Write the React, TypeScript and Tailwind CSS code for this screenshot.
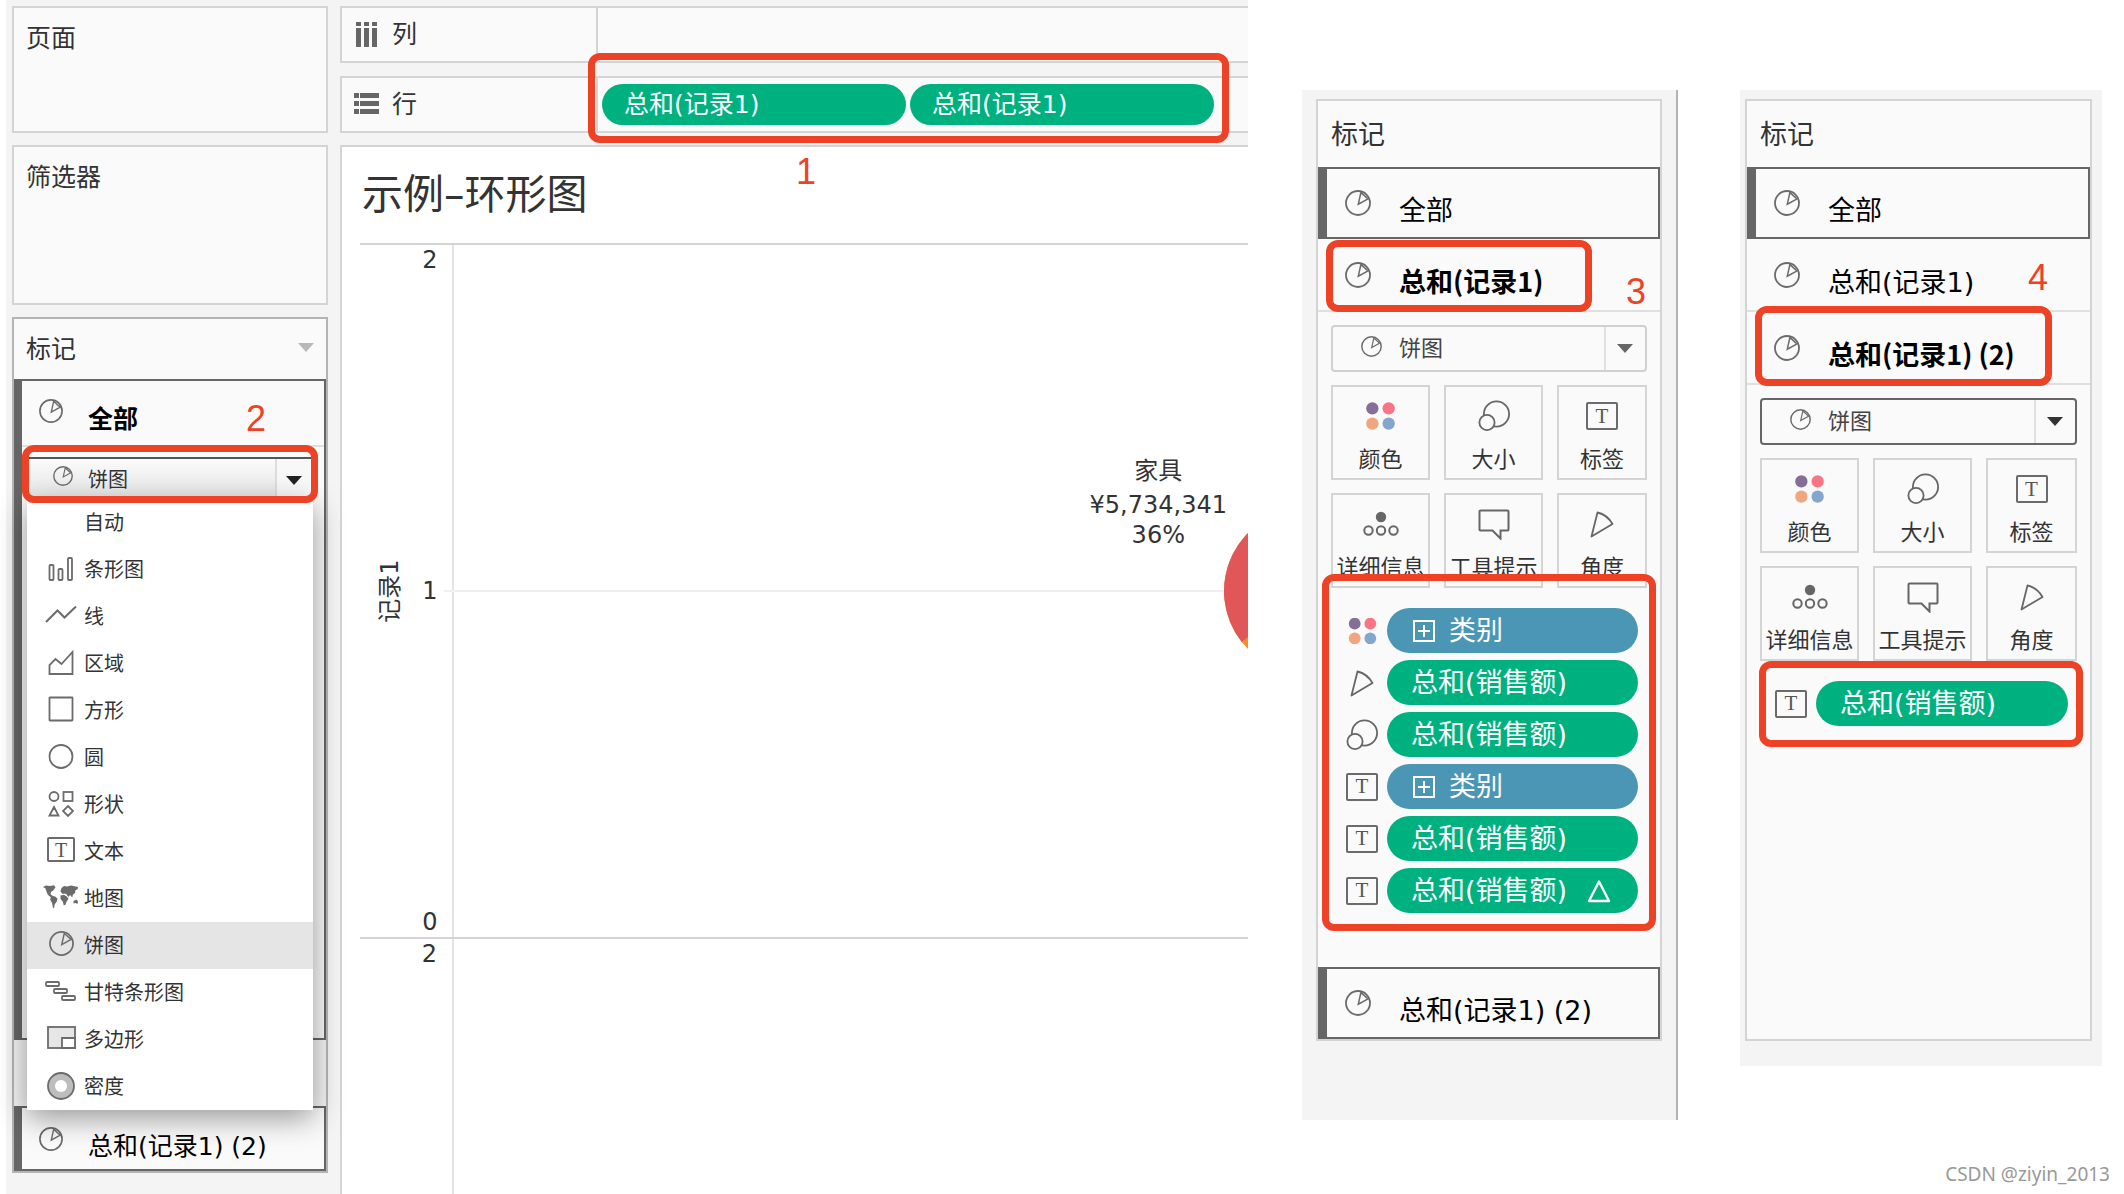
import clsx from 'clsx'
import type { ReactNode } from 'react'

type IconProps = { className?: string }

function PieIcon({ className = 'size-[26px]' }: IconProps) {
  return (
    <svg viewBox="0 0 26 26" fill="none" stroke="#6b6b6b" className={clsx('shrink-0', className)}>
      <circle cx="13" cy="13" r="12" strokeWidth="1.8" />
      <path d="M16 2 13.3 14.2 24 8.3M16 2.6 22.4 8.4" strokeWidth="1.5" />
    </svg>
  )
}

function ColorIcon({ className = 'h-[30px] w-8' }: IconProps) {
  return (
    <svg viewBox="0 0 32 30" className={className}>
      <circle cx="7" cy="6.5" r="6.8" fill="#866f97" />
      <circle cx="25" cy="6.5" r="6.8" fill="#f87585" />
      <circle cx="7" cy="23.5" r="6.8" fill="#f2a67e" />
      <circle cx="25" cy="23.5" r="6.8" fill="#84a5cc" />
    </svg>
  )
}

function SizeIcon() {
  return (
    <svg viewBox="0 0 32 32" fill="#fafafa" stroke="#666" strokeWidth="1.8" className="size-8">
      <circle cx="18.5" cy="14" r="12.6" />
      <circle cx="9" cy="22.5" r="7.6" />
    </svg>
  )
}

function TextIcon({ className = 'h-7 w-8 text-[21px]' }: IconProps) {
  return (
    <span
      className={clsx(
        "flex shrink-0 items-center justify-center rounded-xs border-2 border-[#6b6b6b] font-['Liberation_Serif',serif] leading-none text-[#555]",
        className,
      )}
    >
      T
    </span>
  )
}

function DetailIcon() {
  return (
    <svg viewBox="0 0 36 32" fill="none" stroke="#666" strokeWidth="2" className="h-8 w-9">
      <circle cx="18" cy="9" r="5.2" fill="#666" stroke="none" />
      <circle cx="5.5" cy="22.5" r="4.2" />
      <circle cx="18" cy="22.5" r="4.2" />
      <circle cx="30.5" cy="22.5" r="4.2" />
    </svg>
  )
}

function TooltipIcon() {
  return (
    <svg viewBox="0 0 32 32" fill="none" stroke="#666" strokeWidth="2" className="size-8">
      <path d="M2.5 2.5h27a1 1 0 0 1 1 1v18a1 1 0 0 1-1 1h-7v8l-8-8h-12a1 1 0 0 1-1-1v-18a1 1 0 0 1 1-1Z" />
    </svg>
  )
}

function AngleIcon() {
  return (
    <svg viewBox="0 0 32 32" fill="none" stroke="#666" strokeWidth="1.8" className="size-8">
      <path d="M11.5 4.5C18 6 23 10 26.5 16L5.5 28.5Z" strokeLinejoin="round" />
    </svg>
  )
}

function MenuSvg({ children }: { children: ReactNode }) {
  return (
    <svg viewBox="0 0 36 30" fill="none" stroke="#6b6b6b" strokeWidth="1.8" className="h-[30px] w-9 shrink-0">
      {children}
    </svg>
  )
}

function Caret({ className }: IconProps) {
  return (
    <svg viewBox="0 0 16 9" className={clsx('h-[9px] w-4', className)}>
      <path d="M0 0h16L8 9Z" fill="currentColor" />
    </svg>
  )
}

const markTypes: { name: string; icon: ReactNode }[] = [
  { name: '自动', icon: <MenuSvg>{null}</MenuSvg> },
  {
    name: '条形图',
    icon: (
      <MenuSvg>
        <rect x="6.5" y="10" width="4" height="15" rx="1" />
        <rect x="15.5" y="14" width="4" height="11" rx="1" />
        <rect x="25" y="3" width="4" height="22" rx="1" />
      </MenuSvg>
    ),
  },
  {
    name: '线',
    icon: (
      <MenuSvg>
        <path d="M3 20 14.5 8.500l7 7L33 4.500" strokeWidth="2" />
      </MenuSvg>
    ),
  },
  {
    name: '区域',
    icon: (
      <MenuSvg>
        <path d="M6.5 25V16l6-6 6 5L29.500 3v22Z" />
      </MenuSvg>
    ),
  },
  {
    name: '方形',
    icon: (
      <MenuSvg>
        <rect x="6.500" y="1.500" width="23" height="23" rx="0.500" />
      </MenuSvg>
    ),
  },
  {
    name: '圆',
    icon: (
      <MenuSvg>
        <circle cx="18" cy="13.500" r="11.500" />
      </MenuSvg>
    ),
  },
  {
    name: '形状',
    icon: (
      <MenuSvg>
        <circle cx="11" cy="6.500" r="4.500" />
        <rect x="20.500" y="2" width="9" height="9" />
        <path d="M11 17l4.500 8.500h-9ZM25 16l5 5-5 5-5-5Z" />
      </MenuSvg>
    ),
  },
  {
    name: '文本',
    icon: (
      <span className="flex w-9 shrink-0 justify-center">
        <TextIcon className="mb-1 h-[25px] w-7 text-[20px]" />
      </span>
    ),
  },
  {
    name: '地图',
    icon: (
      <MenuSvg>
        <path
          stroke="none"
          fill="#6b6b6b"
          d="M0 3 3 1.500l4 .5 4-.8 1.500 2-1 1.500-1.500 2-2 1-.5 2.500 2 1.500 3 1 2 2-.8 3-2 2.500-.7 4-1-.5-1-5-1.800-3 .6-2.500-3-2.500L3.500 7.500 2.500 4.500ZM17.500 7l1-3 2.500-2 3 .5 4-1 7 1.500-.5 2.500-2 .5-.5 3-2 1.500-.8 3-2-2.500-2 2-1.500-2.500-2-1-2 .5-1.500-1.500ZM17.500 11.500l3.500-.7 3 2 1.500 2-2 3-1 3-1.700.7-1-4-2.300-2.500ZM30.500 17l3-1.500 1.500 2-.5 2.500-2-1-2 .4Z"
        />
      </MenuSvg>
    ),
  },
  {
    name: '饼图',
    icon: (
      <span className="flex w-9 shrink-0 justify-center">
        <PieIcon className="mb-1 size-[25px]" />
      </span>
    ),
  },
  {
    name: '甘特条形图',
    icon: (
      <MenuSvg>
        <rect x="3" y="4" width="13" height="4" rx="1" />
        <rect x="11" y="11" width="13" height="4" rx="1" />
        <rect x="19" y="18" width="13" height="4" rx="1" />
      </MenuSvg>
    ),
  },
  {
    name: '多边形',
    icon: (
      <MenuSvg>
        <rect x="5" y="2" width="27" height="21" fill="#e6e6e6" />
        <path d="M19 23V13h13v10Z" fill="#fff" />
      </MenuSvg>
    ),
  },
  {
    name: '密度',
    icon: (
      <MenuSvg>
        <circle cx="18" cy="14" r="13" fill="#bdbdbd" />
        <circle cx="18" cy="14" r="6" fill="#fff" stroke="none" />
      </MenuSvg>
    ),
  },
]

function Highlight({ className }: IconProps) {
  return (
    <div
      className={clsx(
        'pointer-events-none absolute z-20 rounded-xl border-[7px] border-[#ee4226]',
        className,
      )}
    />
  )
}

function Step({ value, className }: { value: number; className: string }) {
  return (
    <span
      className={clsx(
        "absolute z-20 font-['Liberation_Sans',sans-serif] text-4xl text-[#ee4226]",
        className,
      )}
    >
      {value}
    </span>
  )
}

type LayerProps = {
  label: string
  card?: boolean
  compact?: boolean
  bold?: boolean
  className?: string
  children?: ReactNode
}

function Layer({ label, card, compact, bold, className, children }: LayerProps) {
  return (
    <div
      className={clsx(
        'relative flex shrink-0 items-center text-black',
        compact ? 'gap-[25px] text-[25px]' : 'gap-7 text-[27px]',
        card && 'border-2 border-[#666]',
        card && (compact ? 'h-[65px] border-l-8 pl-[17px]' : 'h-[72px] border-l-[9px] pl-[18px]'),
        !card && 'border-b-2 border-[#e0e0e0]',
        !card && (compact ? 'h-[66px] pb-1 pl-[17px]' : 'h-[73px] pl-[27px]'),
        className,
      )}
    >
      <PieIcon className={compact ? 'size-6' : 'size-[26px]'} />
      <span
        className={clsx(
          'leading-8 whitespace-nowrap',
          bold ? "mt-3 font-['Noto_Sans_CJK_SC',sans-serif] font-bold" : 'mt-4',
        )}
      >
        {label}
      </span>
      {children}
    </div>
  )
}

function MarkSelect({ labelId, active }: { labelId: string; active?: boolean }) {
  return (
    <div className="relative">
      <select
        aria-labelledby={labelId}
        defaultValue="饼图"
        className={clsx(
          'block h-[47px] w-full appearance-none rounded-sm border-2 pl-[66px] text-[22px] text-[#444]',
          active ? 'border-[#666]' : 'border-[#d0d0d0]',
        )}
      >
        {markTypes.map(({ name }) => (
          <option key={name}>{name}</option>
        ))}
      </select>
      <PieIcon className="pointer-events-none absolute top-[11px] left-[30px] size-[21px]" />
      <div
        className={clsx(
          'pointer-events-none absolute inset-y-[2px] right-[2px] flex w-[41px] items-center justify-center border-l-2 border-[#e0e0e0]',
          active ? 'text-[#333]' : 'text-[#666]',
        )}
      >
        <Caret className="mr-px" />
      </div>
    </div>
  )
}

const tiles = [
  { name: '颜色', icon: <ColorIcon className="h-7 w-[29px]" /> },
  { name: '大小', icon: <SizeIcon /> },
  { name: '标签', icon: <TextIcon /> },
  { name: '详细信息', icon: <DetailIcon /> },
  { name: '工具提示', icon: <TooltipIcon /> },
  { name: '角度', icon: <AngleIcon /> },
]

function Tiles() {
  return (
    <div className="mt-[13px] grid grid-cols-[99px_99px_1fr] gap-x-[14px] gap-y-[13px]">
      {tiles.map(({ name, icon }) => (
        <button
          key={name}
          className="flex h-[95px] flex-col items-center gap-3 border-2 border-[#d4d4d4] pt-[13px] text-[22px] leading-8 whitespace-nowrap text-[#333]"
        >
          <span className="flex h-8 items-center">{icon}</span>
          {name}
        </button>
      ))}
    </div>
  )
}

type Field = { icon: ReactNode; name: string; dimension?: boolean; delta?: boolean }

const layerFields: Field[] = [
  { icon: <ColorIcon className="h-[26px] w-[29px]" />, name: '类别', dimension: true },
  { icon: <AngleIcon />, name: '总和(销售额)' },
  { icon: <SizeIcon />, name: '总和(销售额)' },
  { icon: <TextIcon />, name: '类别', dimension: true },
  { icon: <TextIcon />, name: '总和(销售额)' },
  { icon: <TextIcon />, name: '总和(销售额)', delta: true },
]

function Fields({ items }: { items: Field[] }) {
  return (
    <ul className="relative mt-5 flex flex-col gap-[7px]">
      {items.map(({ icon, name, dimension, delta }, index) => (
        <li key={index} className="flex h-[45px] items-center gap-[9px] pr-[9px] pl-[15px]">
          <span className="flex w-8 shrink-0 justify-center">{icon}</span>
          <div
            className={clsx(
              'flex h-full flex-1 items-center rounded-full text-[27px] text-white',
              dimension ? 'bg-[#4a96b4] pl-[26px]' : 'bg-[#00b180] pl-6',
            )}
          >
            {dimension && (
              <svg viewBox="0 0 22 22" fill="none" stroke="#fff" strokeWidth="2" className="mr-3.5 size-[22px]">
                <path d="M1 1h20v20H1ZM5 11h12M11 5v12" />
              </svg>
            )}
            <span className="leading-8">{name}</span>
            {delta && (
              <svg viewBox="0 0 24 24" fill="none" stroke="#fff" strokeWidth="2.4" className="ml-5 size-6">
                <path d="M12 2.500 22 22H2Z" strokeLinejoin="round" />
              </svg>
            )}
          </div>
        </li>
      ))}
    </ul>
  )
}

function MarksPanel({ titleId, children }: { titleId: string; children: ReactNode }) {
  return (
    <div className="flex min-h-[942px] flex-col border-2 border-[#d4d4d4] bg-[#fafafa]">
      <h2 id={titleId} className="flex h-[66px] shrink-0 items-center pt-0.5 pl-[13px] text-[27px] text-[#333]">
        标记
      </h2>
      {children}
    </div>
  )
}

function MarksDropdown() {
  return (
    <div className="relative mt-[10px] mr-[10px] ml-1">
      <select
        aria-labelledby="marks-title"
        defaultValue="饼图"
        className="block h-[43px] w-full appearance-none border-t-2 border-[#555] bg-linear-to-b from-[#fafafa] to-[#e6e6e6] pl-[62px] text-[20px] text-[#333]"
      >
        {markTypes.map(({ name }) => (
          <option key={name}>{name}</option>
        ))}
      </select>
      <PieIcon className="pointer-events-none absolute top-[9px] left-[27px] size-5" />
      <div className="pointer-events-none absolute top-[2px] right-0 flex h-[40px] w-[39px] items-center justify-center border-l-2 border-[#ddd] bg-[#f8f8f8] text-[#222]">
        <Caret className="mt-0.5 mr-1" />
      </div>
      <ul className="absolute top-[42px] right-px left-px z-10 bg-white shadow-[0_8px_28px_rgba(0,0,0,0.4)]">
        {markTypes.map(({ name, icon }) => (
          <li key={name}>
            <button
              className={clsx(
                'flex h-[47px] w-full items-center gap-[5px] pl-4 text-[20px] text-[#333]',
                name === '饼图' && 'bg-[#e5e5e5]',
              )}
            >
              {icon}
              {name}
            </button>
          </li>
        ))}
      </ul>
      <Highlight className="-top-3 -right-1 -left-1 h-[58px]" />
    </div>
  )
}

function Sidebar() {
  return (
    <aside className="flex flex-col gap-3 text-[25px] text-[#333]">
      <section className="h-[127px] border-2 border-[#d4d4d4] bg-[#fafafa] px-3 py-[15px]">
        <h2 className="leading-8">页面</h2>
      </section>
      <section className="h-40 border-2 border-[#d4d4d4] bg-[#fafafa] px-3 py-[15px]">
        <h2 className="leading-8">筛选器</h2>
      </section>
      <section className="border-2 border-[#b4b4b4] bg-[#f4f4f4]">
        <div className="flex h-[60px] items-center justify-between bg-[#fafafa] px-3">
          <h2 id="marks-title" className="pt-0.5">
            标记
          </h2>
          <Caret className="-mt-1 text-[#b8b8b8]" />
        </div>
        <div className="mb-[66px] min-h-[661px] border-2 border-l-8 border-[#666] bg-[#fafafa]">
          <Layer label="全部" compact bold>
            <Step value={2} className="top-[18px] right-[58px]" />
          </Layer>
          <MarksDropdown />
        </div>
        <Layer label="总和(记录1) (2)" compact card className="bg-[#fafafa]" />
      </section>
    </aside>
  )
}

function Shelf({ icon, name, children }: { icon: ReactNode; name: string; children?: ReactNode }) {
  return (
    <div className="flex h-[57px] border-2 border-r-0 border-[#d4d4d4] bg-[#fafafa] text-[25px] text-[#333]">
      <div className="flex w-[256px] shrink-0 items-center gap-3 border-r-2 border-[#d4d4d4] pl-3">
        {icon}
        {name}
      </div>
      <div className="flex min-w-0 flex-1 items-center gap-1 pl-1">{children}</div>
    </div>
  )
}

function ShelfPill() {
  return (
    <div className="flex h-[41px] w-[304px] items-center rounded-full bg-[#00b180] pl-[22px] text-white">
      总和(记录1)
    </div>
  )
}

function Shelves() {
  return (
    <div className="relative flex flex-col gap-[13px]">
      <Shelf
        name="列"
        icon={
          <svg viewBox="0 0 26 26" fill="#666" className="size-[26px]">
            <path d="M2 0h5v4H2ZM10 0h5v4h-5ZM18 0h5v4h-5ZM2 6h5v19H2ZM10 6h5v19h-5ZM18 6h5v19h-5Z" />
          </svg>
        }
      />
      <Shelf
        name="行"
        icon={
          <svg viewBox="0 0 26 26" fill="#666" className="size-[26px]">
            <path d="M0 1h5v5H0ZM0 9h5v5H0ZM0 17h5v5H0ZM6 1h19v5H6ZM6 9h19v5H6ZM6 17h19v5H6Z" />
          </svg>
        }
      >
        <ShelfPill />
        <ShelfPill />
      </Shelf>
      <Highlight className="-bottom-[10px] left-[248px] h-[90px] w-[641px]" />
      <Step value={1} className="top-[146px] left-[456px]" />
    </div>
  )
}

function Chart() {
  return (
    <section className="flex flex-1 flex-col border-t-2 border-l-2 border-[#d4d4d4] bg-white pl-[18px] text-[24px] text-[#333]">
      <h1 className="flex h-[96px] items-center pt-0.5 pl-[2px] text-[41px]">示例–环形图</h1>
      <div className="flex h-[696px] border-y-2 border-[#d4d4d4]">
        <div className="flex w-[60px] shrink-0 items-center justify-center">
          <span className="-rotate-90 whitespace-nowrap">记录1</span>
        </div>
        <div className="flex w-[34px] shrink-0 flex-col items-center justify-between border-r-2 border-[#e4e4e4] pr-3 leading-[30px]">
          <span>2</span>
          <span>1</span>
          <span>0</span>
        </div>
        <div className="relative flex flex-1 items-center justify-end">
          <div className="absolute right-0 -left-2.5 h-0.5 bg-[#f0f0f0]" />
          <div className="absolute top-[211px] right-[21px] text-center leading-[30px]">
            <p className="mb-1">家具</p>
            <p>¥5,734,341</p>
            <p>36%</p>
          </div>
          <svg viewBox="0 0 24 164" className="relative h-[164px] w-6">
            <circle cx="82" cy="82" r="82" fill="#f28e2b" />
            <path d="M82 82 17.800 133A82 82 0 0 1 82 0Z" fill="#e15759" />
          </svg>
        </div>
      </div>
      <div className="flex flex-1">
        <div className="flex w-[94px] shrink-0 justify-end border-r-2 border-[#e4e4e4] pr-[15px] leading-[30px]">
          2
        </div>
      </div>
    </section>
  )
}

export default function App() {
  return (
    <div className="relative flex min-h-screen bg-white pr-[22px] pl-[6px] font-['DejaVu_Sans','Noto_Sans_CJK_SC',sans-serif]">
      <main className="grid min-w-0 flex-1 grid-cols-[316px_1fr] gap-x-3 bg-[#f4f4f4] pt-[6px] pl-[6px]">
        <Sidebar />
        <div className="flex min-w-0 flex-col gap-3">
          <Shelves />
          <Chart />
        </div>
      </main>

      <section className="mt-[90px] ml-[54px] h-fit w-[376px] border-r-2 border-[#b4b4b4] bg-[#f4f4f4] pt-[9px] pr-[14px] pb-[79px] pl-[14px]">
        <MarksPanel titleId="marks-first-title">
          <Layer label="全部" card />
          <Layer label="总和(记录1)" bold>
            <Highlight className="top-px left-2 h-[72px] w-[266px]" />
            <Step value={3} className="top-[33px] right-[14px]" />
          </Layer>
          <div className="px-[13px] pt-[13px]">
            <MarkSelect labelId="marks-first-title" />
            <Tiles />
            <div className="relative">
              <Fields items={layerFields} />
              <Highlight className="-inset-x-[9px] -top-[34px] -bottom-[18px]" />
            </div>
          </div>
          <Layer label="总和(记录1) (2)" card className="mt-auto" />
        </MarksPanel>
      </section>

      <section className="mt-[90px] ml-[62px] h-fit w-[362px] bg-[#f4f4f4] pt-[9px] pr-[10px] pb-[25px] pl-[5px]">
        <MarksPanel titleId="marks-second-title">
          <Layer label="全部" card />
          <Layer label="总和(记录1)">
            <Step value={4} className="top-[19px] right-[42px]" />
          </Layer>
          <Layer label="总和(记录1) (2)" bold>
            <Highlight className="-top-[6px] left-2 h-20 w-[297px]" />
          </Layer>
          <div className="px-[13px] pt-[13px]">
            <MarkSelect labelId="marks-second-title" active />
            <Tiles />
            <div className="relative">
              <Fields items={[{ icon: <TextIcon />, name: '总和(销售额)' }]} />
              <Highlight className="-right-[6px] -bottom-[21px] -left-px h-[86px]" />
            </div>
          </div>
        </MarksPanel>
      </section>

      <footer className="absolute right-3.5 bottom-2 font-['Noto_Sans',sans-serif] text-[19px] leading-6 text-[#999]">
        CSDN @ziyin_2013
      </footer>
    </div>
  )
}
